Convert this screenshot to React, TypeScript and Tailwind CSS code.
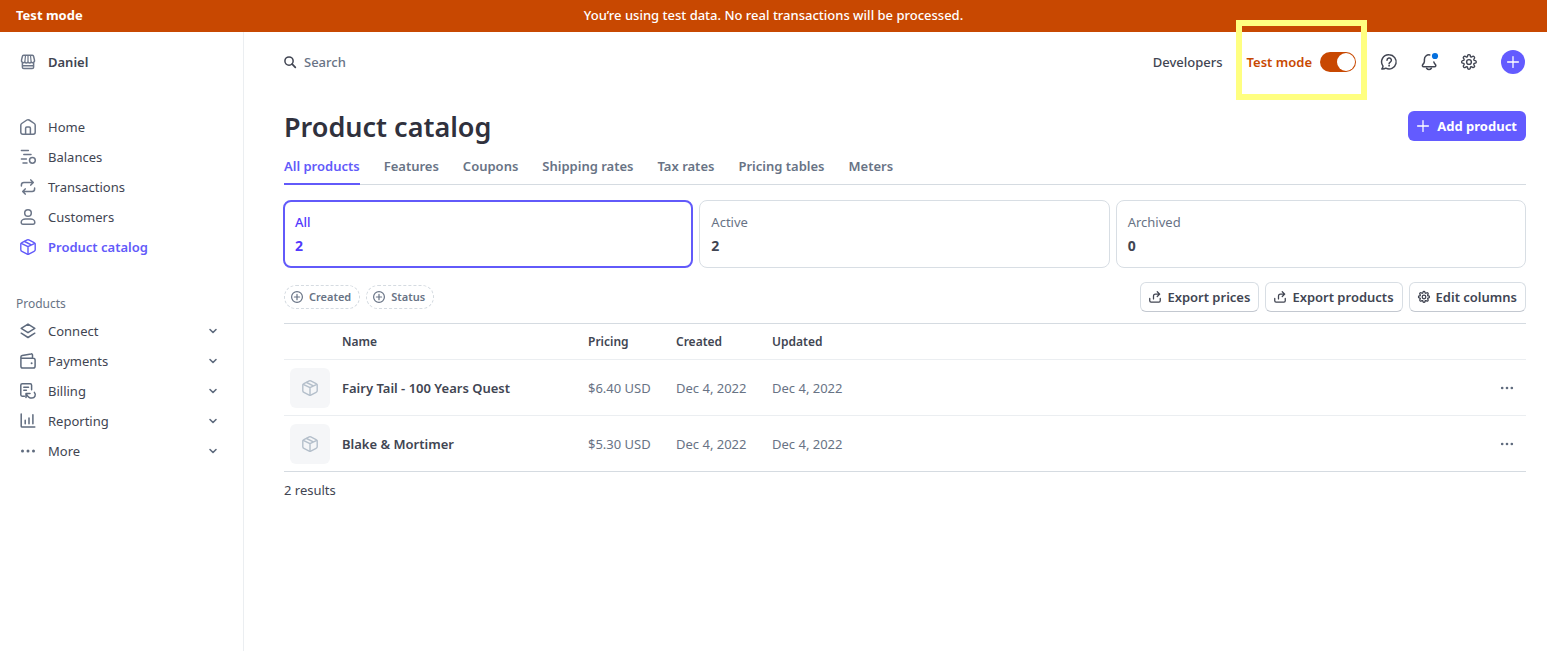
import type { ReactNode } from "react";

type IconProps = { className?: string; children?: ReactNode };

function Svg({ className = "size-4", children }: IconProps) {
  return (
    <svg
      viewBox="0 0 16 16"
      fill="none"
      stroke="currentColor"
      strokeWidth="1.5"
      strokeLinecap="round"
      strokeLinejoin="round"
      aria-hidden="true"
      className={`shrink-0 overflow-visible ${className}`}
    >
      {children}
    </svg>
  );
}

const StoreIcon = () => (
  <Svg className="size-4 text-[#6c7688]">
    <path d="M3.600 1.300h8.800c.6 0 1.100.4 1.200 1l.9 3.900a2 2 0 0 1-3.200 2 2.200 2.200 0 0 1-3.300 0 2.200 2.200 0 0 1-3.300 0 2 2 0 0 1-3.200-2l.9-3.900c.1-.6.6-1 1.200-1Z" />
    <path d="M5.500 1.500L4.900 7.600M10.500 1.500l.6 6.100M8 1.500v6.300" strokeWidth="1.200" />
    <path d="M2.400 9v4.200c0 .8.600 1.400 1.400 1.400h8.400c.8 0 1.400-.6 1.400-1.400V9M2.600 11.800h10.800" />
  </Svg>
);

const HomeIcon = () => (
  <Svg className="size-4 text-[#6c7688]">
    <path d="M.8 6.200c0-.7.3-1.300.9-1.700L6.900 1a2 2 0 0 1 2.200 0l5.200 3.500c.6.400.9 1 .9 1.700v7.100a1.900 1.900 0 0 1-1.900 1.900H2.700a1.900 1.900 0 0 1-1.900-1.900V6.200Z" />
    <path d="M5.600 15V9.300c0-.7.500-1.200 1.200-1.200h2.400c.7 0 1.200.5 1.200 1.200V15" />
  </Svg>
);

const BalancesIcon = () => (
  <Svg className="size-4 text-[#6c7688]">
    <path d="M1.400 1.500h7M3.800 5.500h7.200M1.400 10h5M3 14h4" />
    <circle cx="12.400" cy="11.300" r="2.900" />
  </Svg>
);

const TransactionsIcon = () => (
  <Svg className="size-4 text-[#6c7688]">
    <path d="M10.800.9l2.500 2.600-2.500 2.600M1.400 7V6a2.500 2.500 0 0 1 2.500-2.500h9.200" />
    <path d="M5.200 15.100l-2.500-2.600 2.500-2.600M14.600 9v1a2.500 2.500 0 0 1-2.500 2.500H2.900" />
  </Svg>
);

const CustomersIcon = () => (
  <Svg className="size-4 text-[#6c7688]">
    <circle cx="8" cy="4" r="3.300" />
    <path d="M1.200 13.200c0-2.100 2.400-3.200 4.200-3.200h5.200c1.800 0 4.200 1.100 4.200 3.200 0 1.200-.7 2-1.800 2H3c-1.100 0-1.800-.8-1.800-2Z" />
  </Svg>
);

const BoxIcon = ({ className }: { className?: string }) => (
  <Svg className={className}>
    <path
      d="M7.200.9c.5-.2 1.100-.2 1.600 0l5.300 2.700c.7.300 1.100.9 1.100 1.600v5.600c0 .7-.4 1.300-1.100 1.600l-5.300 2.700c-.5.200-1.100.2-1.600 0l-5.300-2.700A1.700 1.700 0 0 1 .8 10.800V5.200c0-.7.4-1.300 1.100-1.600L7.200.9Z"
      strokeWidth="1.400"
    />
    <path d="M1.200 4.400L8 7.700l6.800-3.300M8 7.800v7.300M4.600 2.500l6.700 3.300" strokeWidth="1.400" />
  </Svg>
);

const ConnectIcon = () => (
  <Svg className="size-4 text-[#5f6b7e]">
    <path d="M8 1.100l6.800 4.300L8 9.700 1.200 5.400 8 1.100Z" />
    <path d="M1.200 10.200L8 14.500l6.800-4.300" />
  </Svg>
);

const PaymentsIcon = () => (
  <Svg className="size-4 text-[#5f6b7e]">
    <path d="M.9 5.200h12.300c1 0 1.900.8 1.900 1.800v6.300c0 1-.9 1.800-1.900 1.800H2.700c-1 0-1.800-.8-1.800-1.800V4.100c0-.8.500-1.400 1.300-1.600L11 .9c.8-.2 1.500.4 1.500 1.200v3" />
    <circle cx="11.600" cy="10.200" r="1" fill="currentColor" stroke="none" />
  </Svg>
);

const BillingIcon = () => (
  <Svg className="size-4 text-[#5f6b7e]">
    <path d="M4.400 13.200H2.200A1.400 1.400 0 0 1 .8 11.800V2.200C.8 1.400 1.400.8 2.200.8h8c.8 0 1.400.6 1.400 1.400v4.600M3.800 4.200h4.700M3.800 7.300h2.600" />
    <path d="M6 14.600v-4h4M6.200 10.800c1.300 2.600 3.200 4.300 5.600 4.300a3.400 3.400 0 0 0 2.600-5.700" />
  </Svg>
);

const ReportingIcon = () => (
  <Svg className="size-4 text-[#5f6b7e]">
    <path d="M1.200.9v12.300c0 .6.300.9.900.9h12.700M5.200 7.200v3.600M9 5v5.800M12.900 1.800v9" />
  </Svg>
);

const DotsIcon = ({ className = "size-4" }: { className?: string }) => (
  <Svg className={className}>
    <g fill="currentColor" stroke="none">
      <circle cx="2.500" cy="8" r="1.500" />
      <circle cx="8" cy="8" r="1.500" />
      <circle cx="13.500" cy="8" r="1.500" />
    </g>
  </Svg>
);

const ChevronIcon = () => (
  <Svg className="size-2 text-[#5f6b7e]">
    <path d="M2 5l6 6 6-6" strokeWidth="3.200" />
  </Svg>
);

const SearchIcon = () => (
  <Svg className="size-3 text-[#414552]">
    <circle cx="6.700" cy="6.700" r="5.500" strokeWidth="2" />
    <path d="M10.900 10.900l4.200 4.200" strokeWidth="2.300" />
  </Svg>
);

const HelpIcon = () => (
  <Svg>
    <path d="M8.200.8a7.100 7.100 0 1 1-3.400 13.400c-1 .7-2.500 1-4 .9.800-.9 1.200-1.900 1.200-3A7.100 7.100 0 0 1 8.200.8Z" />
    <path d="M6 6.200a2.200 2.200 0 1 1 3.300 1.900c-.8.500-1.200.8-1.200 1.600" />
    <circle cx="8.100" cy="11.700" r=".9" fill="currentColor" stroke="none" />
  </Svg>
);

const BellIcon = () => (
  <Svg>
    <path d="M8.800.9C5.600.5 3.400 2.700 3.400 5.600v1.600c0 1.400-.6 2.300-1.500 3.200-1 1-.5 2.300.9 2.300h10.600c1.400 0 1.900-1.300.9-2.300-.7-.7-1.200-1.400-1.400-2.300" />
    <path d="M5.600 14.200c.6.800 1.400 1.300 2.400 1.300s1.800-.5 2.400-1.300" />
    <circle cx="14" cy="2" r="3.100" fill="#0570de" stroke="none" />
  </Svg>
);

const GearIcon = ({ className = "size-4", stroke = 1.4 }: { className?: string; stroke?: number }) => (
  <Svg className={className}>
    <path
      d="M6.900 1.500c.2-1 2-1 2.200 0l.2.900c.1.400.6.600 1 .4l.8-.5c.9-.6 2.100.6 1.600 1.600l-.5.800c-.2.400 0 .9.400 1l.9.200c1 .2 1 2 0 2.200l-.9.200c-.4.100-.6.600-.4 1l.5.800c.6.900-.6 2.100-1.600 1.600l-.8-.5c-.4-.2-.9 0-1 .4l-.2.900c-.2 1-2 1-2.200 0l-.2-.9c-.1-.4-.6-.6-1-.4l-.8.500c-.9.600-2.100-.6-1.600-1.600l.5-.8c.2-.4 0-.9-.4-1l-.9-.2c-1-.2-1-2 0-2.200l.9-.2c.4-.1.600-.6.400-1l-.5-.8c-.6-.9.600-2.100 1.600-1.600l.8.500c.4.200.9 0 1-.4l.2-.9Z"
      transform="translate(-1.400 -.3) scale(1.170)"
      strokeWidth={stroke / 1.17}
    />
    <circle cx="8" cy="8" r="2.400" strokeWidth={stroke} />
  </Svg>
);

const PlusIcon = () => (
  <Svg className="size-3">
    <path d="M8 .8v14.400M.8 8h14.400" strokeWidth="1.700" />
  </Svg>
);

const CirclePlusIcon = () => (
  <Svg className="size-3 text-[#687385]">
    <circle cx="8" cy="8" r="7.200" strokeWidth="1.600" />
    <path d="M8 4.500v7M4.500 8h7" strokeWidth="1.600" />
  </Svg>
);

const ExportIcon = () => (
  <Svg className="size-3">
    <path d="M1 10v3c0 1 .7 1.700 1.700 1.700h10.600c1 0 1.700-.7 1.700-1.700v-3" strokeWidth="1.700" />
    <path d="M6 10.500V6.800c0-1.500 1-2.600 2.600-2.600H14M11 1l3.300 3.200L11 7.400" strokeWidth="1.700" />
  </Svg>
);

const mainNav = [
  { label: "Home", icon: <HomeIcon /> },
  { label: "Balances", icon: <BalancesIcon /> },
  { label: "Transactions", icon: <TransactionsIcon /> },
  { label: "Customers", icon: <CustomersIcon /> },
  { label: "Product catalog", icon: <BoxIcon />, active: true },
];

const productNav = [
  { label: "Connect", icon: <ConnectIcon /> },
  { label: "Payments", icon: <PaymentsIcon /> },
  { label: "Billing", icon: <BillingIcon /> },
  { label: "Reporting", icon: <ReportingIcon /> },
  { label: "More", icon: <DotsIcon className="size-4 text-[#5f6b7e]" /> },
];

const tabs = ["All products", "Features", "Coupons", "Shipping rates", "Tax rates", "Pricing tables", "Meters"];

const counts = [
  { label: "All", value: 2, active: true },
  { label: "Active", value: 2 },
  { label: "Archived", value: 0 },
];

const products = [
  { name: "Fairy Tail - 100 Years Quest", price: "$6.40 USD", created: "Dec 4, 2022", updated: "Dec 4, 2022" },
  { name: "Blake & Mortimer", price: "$5.30 USD", created: "Dec 4, 2022", updated: "Dec 4, 2022" },
];

function Sidebar() {
  return (
    <aside className="w-61 shrink-0 border-r border-[#ebeef1] px-4 pt-4">
      <button type="button" className="flex h-7 items-center gap-3 px-1 font-semibold">
        <StoreIcon />
        Daniel
      </button>
      <nav aria-label="Main" className="mt-9">
        <ul>
          {mainNav.map((item) => (
            <li key={item.label}>
              <a
                href="#"
                aria-current={item.active ? "page" : undefined}
                className={`flex h-[30px] items-center gap-3 px-1 ${item.active ? "font-semibold text-[#625afa]" : ""}`}
              >
                {item.icon}
                {item.label}
              </a>
            </li>
          ))}
        </ul>
      </nav>
      <nav aria-labelledby="products-heading" className="mt-8">
        <h2 id="products-heading" className="text-[12px] leading-5 text-[#687385]">
          Products
        </h2>
        <ul className="mt-[2px]">
          {productNav.map((item) => (
            <li key={item.label}>
              <button type="button" aria-expanded="false" className="flex h-[30px] w-full items-center gap-3 pr-[10px] pl-1">
                {item.icon}
                <span className="grow text-left">{item.label}</span>
                <ChevronIcon />
              </button>
            </li>
          ))}
        </ul>
      </nav>
    </aside>
  );
}

function TopBar() {
  return (
    <header className="flex h-[60px] items-center pr-px">
      <label className="flex grow items-center gap-2">
        <SearchIcon />
        <input
          type="search"
          aria-label="Search"
          placeholder="Search"
          className="w-full bg-transparent font-medium outline-none placeholder:text-[#687385]"
        />
      </label>
      <div className="flex items-center gap-6">
        <a href="#" className="font-medium">
          Developers
        </a>
        <label className="relative mr-px flex items-center gap-2 font-semibold whitespace-nowrap text-[#c84801]">
          Test mode
          <input
            type="checkbox"
            role="switch"
            defaultChecked
            className="h-5 w-9 appearance-none rounded-full bg-[#c84801] p-px before:ml-auto before:block before:size-[18px] before:rounded-full before:bg-white"
          />
          <span className="pointer-events-none absolute -inset-x-[11px] -top-8 -bottom-7 border-6 border-[#ffff80]" />
        </label>
        <button type="button" aria-label="Help">
          <HelpIcon />
        </button>
        <button type="button" aria-label="Notifications">
          <BellIcon />
        </button>
        <button type="button" aria-label="Settings">
          <GearIcon />
        </button>
        <button
          type="button"
          aria-label="Create"
          className="flex size-6 items-center justify-center rounded-full bg-[#635bff] text-white"
        >
          <PlusIcon />
        </button>
      </div>
    </header>
  );
}

function ActionButton({ icon, children }: { icon: ReactNode; children: ReactNode }) {
  return (
    <button
      type="button"
      className="flex h-[30px] items-center gap-[6px] rounded-md border border-[#d8dee4] border-b-[#c3c8d0] px-2 font-semibold whitespace-nowrap"
    >
      {icon}
      {children}
    </button>
  );
}

function ProductTable() {
  return (
    <div className="mt-[11px] border-t border-[#d5dbe1]">
      <table className="w-full table-fixed border-separate border-spacing-0 text-left">
        <colgroup>
          <col className="w-[58px]" />
          <col className="w-[246px]" />
          <col className="w-[88px]" />
          <col className="w-[96px]" />
          <col />
          <col className="w-8" />
        </colgroup>
        <thead>
          <tr className="text-[12px] *:h-9 *:border-b *:border-[#ebeef1] *:font-semibold">
            <td />
            <th scope="col">Name</th>
            <th scope="col">Pricing</th>
            <th scope="col">Created</th>
            <th scope="col">Updated</th>
            <td />
          </tr>
        </thead>
        <tbody>
          {products.map((product) => (
            <tr
              key={product.name}
              className="text-[#687385] *:h-14 *:border-b *:border-[#ebeef1] last:*:border-[#d5dbe1]"
            >
              <td className="pl-[6px]">
                <span className="flex size-10 items-center justify-center rounded-md bg-[#f5f6f8] text-[#b4bfcb]">
                  <BoxIcon />
                </span>
              </td>
              <td className="font-semibold text-[#414552]">{product.name}</td>
              <td>{product.price}</td>
              <td>{product.created}</td>
              <td>{product.updated}</td>
              <td>
                <button
                  type="button"
                  aria-label={`Actions for ${product.name}`}
                  className="flex h-6 w-[26px] items-center justify-center"
                >
                  <DotsIcon className="size-[14px] text-[#5f6b7e]" />
                </button>
              </td>
            </tr>
          ))}
        </tbody>
      </table>
    </div>
  );
}

export default function App() {
  return (
    <div className="flex min-h-screen flex-col bg-white font-['Noto_Sans',sans-serif] text-[13px] leading-5 text-[#414552]">
      <div className="grid h-8 grid-cols-[1fr_auto_1fr] items-center bg-[#c84801] px-4 pb-[2px] text-white">
        <strong className="font-bold">Test mode</strong>
        <p className="font-medium">You’re using test data. No real transactions will be processed.</p>
      </div>
      <div className="flex grow">
        <Sidebar />
        <div className="min-w-0 grow pr-[21px] pl-10">
          <TopBar />
          <main>
            <div className="flex h-16 items-start justify-between pt-[19px]">
              <h1 className="text-[27px] leading-8 font-semibold text-[#30313d]">Product catalog</h1>
              <button
                type="button"
                className="flex h-[30px] items-center gap-2 rounded-md bg-[#635bff] px-[9px] font-bold whitespace-nowrap text-white"
              >
                <PlusIcon />
                Add product
              </button>
            </div>
            <nav aria-label="Catalog" className="flex gap-6 border-b border-[#d5dbe1]">
              {tabs.map((tab, index) => (
                <a
                  key={tab}
                  href="#"
                  aria-current={index === 0 ? "page" : undefined}
                  className={`-mb-px h-[29px] border-b-2 font-semibold whitespace-nowrap ${
                    index === 0 ? "border-[#625afa] text-[#625afa]" : "border-transparent text-[#687385]"
                  }`}
                >
                  {tab}
                </a>
              ))}
            </nav>
            <div className="mt-[15px] -ml-px grid grid-cols-3 gap-[6px]">
              {counts.map((count) => (
                <button
                  key={count.label}
                  type="button"
                  aria-pressed={Boolean(count.active)}
                  className={`flex h-[68px] flex-col gap-1 rounded-lg text-left ${
                    count.active
                      ? "border-2 border-[#625afa] px-[10px] pt-[10px] text-[#533afd]"
                      : "border border-[#d8dee4] px-[11px] pt-[11px] text-[#687385]"
                  }`}
                >
                  <span className={count.active ? "font-medium" : ""}>{count.label}</span>
                  <span className={`text-[14px] font-bold ${count.active ? "" : "text-[#414552]"}`}>{count.value}</span>
                </button>
              ))}
            </div>
            <div className="mt-[14px] flex items-center gap-[6px]">
              {["Created", "Status"].map((filter) => (
                <button
                  key={filter}
                  type="button"
                  className="flex h-6 items-center gap-[6px] rounded-full border border-dashed border-[#d5dbe1] pr-2 pl-[6px] text-[11px] font-semibold text-[#687385]"
                >
                  <CirclePlusIcon />
                  {filter}
                </button>
              ))}
              <div className="ml-auto flex gap-[6px]">
                <ActionButton icon={<ExportIcon />}>Export prices</ActionButton>
                <ActionButton icon={<ExportIcon />}>Export products</ActionButton>
                <ActionButton icon={<GearIcon className="size-3" stroke={1.7} />}>Edit columns</ActionButton>
              </div>
            </div>
            <ProductTable />
            <p className="mt-2">2 results</p>
          </main>
        </div>
      </div>
    </div>
  );
}
